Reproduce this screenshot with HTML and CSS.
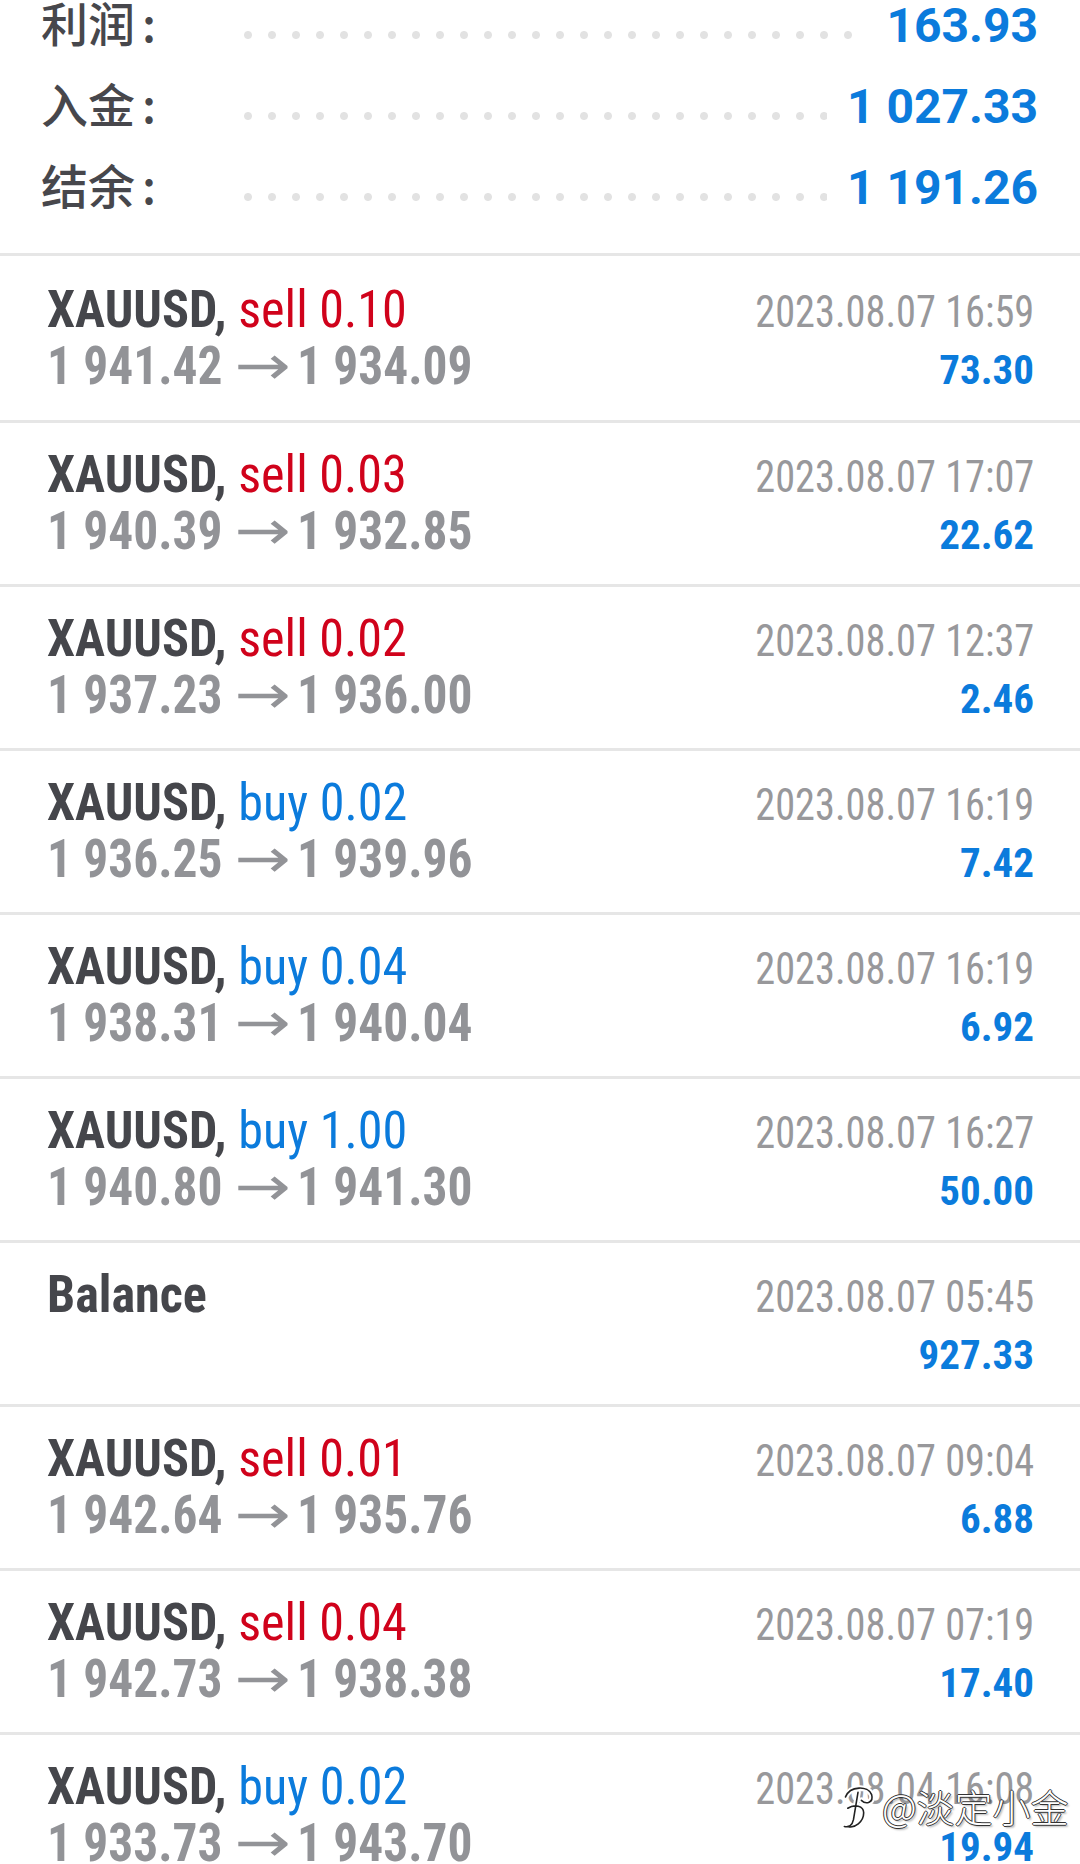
FILE: index.html
```html
<!DOCTYPE html>
<html lang="zh-CN">
  <head>
    <meta charset="UTF-8" />
    <meta name="viewport" content="width=device-width, initial-scale=1.0" />
    <title>History</title>
    <link rel="stylesheet" href="styles.css">
  </head>
  <body>
    <div class="summary">
      <div class="sum-row">
        <span class="sum-label">利润<span class="colon">:</span></span>
        <span class="leader"></span>
        <span class="sum-value">163.93</span>
      </div>
      <div class="sum-row">
        <span class="sum-label">入金<span class="colon">:</span></span>
        <span class="leader"></span>
        <span class="sum-value">1 027.33</span>
      </div>
      <div class="sum-row">
        <span class="sum-label">结余<span class="colon">:</span></span>
        <span class="leader"></span>
        <span class="sum-value">1 191.26</span>
      </div>
    </div>

    <div class="trades">
      <div class="trade">
        <div class="title">XAUUSD, <span class="side sell">sell 0.10</span></div>
        <div class="time">2023.08.07 16:59</div>
        <div class="price">1 941.42<span class="arrow">→</span>1 934.09</div>
        <div class="profit">73.30</div>
      </div>
      <div class="trade">
        <div class="title">XAUUSD, <span class="side sell">sell 0.03</span></div>
        <div class="time">2023.08.07 17:07</div>
        <div class="price">1 940.39<span class="arrow">→</span>1 932.85</div>
        <div class="profit">22.62</div>
      </div>
      <div class="trade">
        <div class="title">XAUUSD, <span class="side sell">sell 0.02</span></div>
        <div class="time">2023.08.07 12:37</div>
        <div class="price">1 937.23<span class="arrow">→</span>1 936.00</div>
        <div class="profit">2.46</div>
      </div>
      <div class="trade">
        <div class="title">XAUUSD, <span class="side buy">buy 0.02</span></div>
        <div class="time">2023.08.07 16:19</div>
        <div class="price">1 936.25<span class="arrow">→</span>1 939.96</div>
        <div class="profit">7.42</div>
      </div>
      <div class="trade">
        <div class="title">XAUUSD, <span class="side buy">buy 0.04</span></div>
        <div class="time">2023.08.07 16:19</div>
        <div class="price">1 938.31<span class="arrow">→</span>1 940.04</div>
        <div class="profit">6.92</div>
      </div>
      <div class="trade">
        <div class="title">XAUUSD, <span class="side buy">buy 1.00</span></div>
        <div class="time">2023.08.07 16:27</div>
        <div class="price">1 940.80<span class="arrow">→</span>1 941.30</div>
        <div class="profit">50.00</div>
      </div>
      <div class="trade">
        <div class="title">Balance</div>
        <div class="time">2023.08.07 05:45</div>
        <div class="price">&nbsp;</div>
        <div class="profit">927.33</div>
      </div>
      <div class="trade">
        <div class="title">XAUUSD, <span class="side sell">sell 0.01</span></div>
        <div class="time">2023.08.07 09:04</div>
        <div class="price">1 942.64<span class="arrow">→</span>1 935.76</div>
        <div class="profit">6.88</div>
      </div>
      <div class="trade">
        <div class="title">XAUUSD, <span class="side sell">sell 0.04</span></div>
        <div class="time">2023.08.07 07:19</div>
        <div class="price">1 942.73<span class="arrow">→</span>1 938.38</div>
        <div class="profit">17.40</div>
      </div>
      <div class="trade">
        <div class="title">XAUUSD, <span class="side buy">buy 0.02</span></div>
        <div class="time">2023.08.04 16:08</div>
        <div class="price">1 933.73<span class="arrow">→</span>1 943.70</div>
        <div class="profit">19.94</div>
      </div>
    </div>

    <!-- watermark over the last row -->
    <div class="watermark">
      <svg class="wm-logo" width="40" height="50" viewBox="0 0 34 44">
        <path d="M6 14 C10 4 26 4 29 12 C31 19 24 21 20 17 M8 24 C14 20 22 22 22 28 C22 36 14 42 8 40 M17 10 L13 34 C12 39 9 41 5 40" fill="none" stroke="#fff" stroke-width="5" stroke-linecap="round" />
        <path d="M6 14 C10 4 26 4 29 12 C31 19 24 21 20 17 M8 24 C14 20 22 22 22 28 C22 36 14 42 8 40 M17 10 L13 34 C12 39 9 41 5 40" fill="none" stroke="#222" stroke-width="1.4" stroke-linecap="round" />
      </svg>
      <span class="wm-text">@淡定小金</span>
    </div>
  </body>
</html>
```

FILE: styles.css
```css
* {
  box-sizing: border-box;
}
html,
body {
  margin: 0;
  background: #fff;
}
body {
  position: relative;
  height: 1864px;
  overflow: hidden;
  font-family: "Roboto Condensed", Roboto, "Noto Sans CJK SC", sans-serif;
}

/* summary block */
.summary {
  height: 253px;
  padding: 0 42px 0 41px;
  display: flex;
  flex-direction: column;
  gap: 29px;
}
.sum-row {
  display: flex;
  align-items: baseline;
  line-height: 52px;
}
.sum-label {
  width: 195px;
  line-height: 44px;
  font-family: "Noto Sans CJK SC", sans-serif;
  font-size: 47px;
  font-weight: 500;
  color: #47474c;
}
.colon {
  margin-left: 7px;
}
.leader {
  flex: 1;
  height: 12px;
  margin-right: 20px;
  background: radial-gradient(circle at 12px 5px, #e2e2e2 3.5px, transparent 4.5px) repeat-x;
  background-size: 24px 12px;
}
.sum-value {
  font-family: Roboto, sans-serif;
  font-size: 48px;
  font-weight: 700;
  color: #0b7bdc;
}

/* trade list */
.trade {
  height: 164px;
  border-top: 3px solid #e6e6e6;
  padding: 23px 46px 0 47px;
  display: grid;
  grid-template-columns: 1fr auto;
  grid-template-rows: 56px 56px;
  align-items: baseline;
  line-height: 57px;
  white-space: nowrap;
}
.trade:first-child {
  height: 167px;
  padding-top: 25px;
}
.title {
  font-size: 52px;
  font-weight: 700;
  color: #45464b;
  transform: scaleX(0.965);
  transform-origin: left center;
}
.side {
  font-weight: 400;
}
.sell {
  color: #d0021b;
}
.buy {
  color: #0b7bdc;
}
.price {
  font-size: 54px;
  font-weight: 700;
  color: #929397;
  transform: scaleX(0.915);
  transform-origin: left center;
}
.arrow {
  display: inline-block;
  margin: 0 23px 0 13px;
  font-family: "DejaVu Sans", sans-serif;
  font-weight: 400;
  transform: scaleX(1.36);
  transform-origin: left center;
}
.time {
  font-size: 44px;
  color: #98989b;
  text-align: right;
  transform: scaleX(0.917);
  transform-origin: right center;
}
.profit {
  font-size: 41px;
  font-weight: 700;
  color: #0b7bdc;
  text-align: right;
}

.watermark {
  position: absolute;
  left: 838px;
  top: 1778px;
  display: flex;
  align-items: center;
  gap: 4px;
}
.wm-text {
  font-family: "Noto Sans CJK SC", sans-serif;
  font-size: 38px;
  font-weight: 300;
  color: #fff;
  text-shadow: 1px 0 #333, -1px 0 #333, 0 1px #333, 0 -1px #333, 2px 2px 2px rgba(0, 0, 0, 0.3);
}
```
